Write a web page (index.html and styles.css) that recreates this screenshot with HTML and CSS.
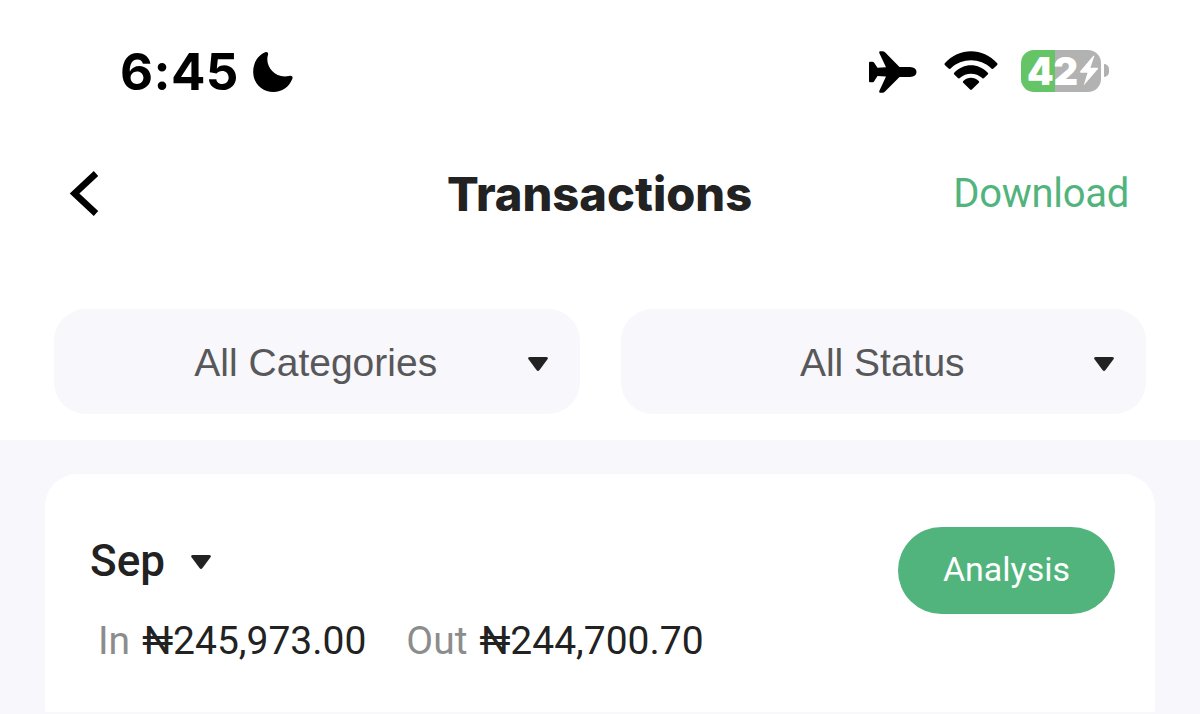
FILE: index.html
```html
<!DOCTYPE html>
<html lang="en">
<head>
    <meta charset="UTF-8">
    <meta name="viewport" content="width=device-width, initial-scale=1.0">
    <title>Transactions</title>
    <link rel="stylesheet" href="styles.css">
</head>
<body>

<!-- Status bar -->
<div class="status-bar">
    <div class="status-left">
        <span class="time">6:45</span>
        <svg class="moon" width="42" height="42" viewBox="0 0 42 42">
            <path d="M13.2 1.3C15 .6 16.6 1.8 16 3.700C12.500 15 22.500 28 37 25C39.500 24.300 41.300 25.500 40.300 28C37 36 30 41 21.500 41C10 41 1.200 32.500 1.200 21C1.200 12 5.500 4.500 13.200 1.300Z"/>
        </svg>
    </div>
    <div class="status-right">
        <svg class="plane" width="50" height="44" viewBox="0 0 50 44">
            <path d="M2 11.700H4.300Q5.400 11.700 6 12.600L9.500 17.800L18 17.200L11.300 3Q10.500 1.200 12.200 1.200H14.500Q16 1.200 17 2.300L31.500 17H42Q48.500 17.500 48.500 22Q48.500 26.500 42 27H31.500L17 41.500Q16 42.700 14.500 42.700H12.200Q10.500 42.700 11.300 41L18 26.600L9.500 26.100L6 31.400Q5.400 32.300 4.300 32.300H2Q1 32.300 1 31.300V12.700Q1 11.700 2 11.700Z"/>
        </svg>
        <svg class="wifi" width="56" height="42" viewBox="0 0 56 42">
            <path d="M1.800 13.200C16 -2.800 40 -2.800 54.200 13.200Q55 14.200 54 15.200L50.400 18.500Q49.400 19.400 48.400 18.400C37 7.500 19 7.500 7.600 18.400Q6.600 19.400 5.600 18.500L2 15.200Q1 14.200 1.800 13.200Z"/>
            <path d="M11.200 22.700C20.500 12.600 35.500 12.600 44.800 22.700Q45.700 23.700 44.700 24.600L41.100 28.100Q40.200 29 39.200 28C33 22.200 23 22.200 16.800 28Q15.800 29 14.900 28.100L11.300 24.600Q10.300 23.700 11.200 22.700Z"/>
            <path d="M20.300 31C25 26.800 31 26.800 35.700 31Q36.700 31.900 35.800 32.800L28.900 39.600Q28 40.500 27.100 39.600L20.200 32.800Q19.300 31.900 20.300 31Z"/>
        </svg>
        <div class="battery">
            <div class="battery-body">
                <span class="battery-level">42</span>
                <svg class="bolt" width="20" height="31" viewBox="0 0 18 29">
                    <path d="M13.200 .5L.8 15.300Q0 16.500 1.500 16.500H7.600L4 28.500L17.300 13.200Q18 12 16.600 12H10.300L14 1.200Z"/>
                </svg>
            </div>
            <div class="battery-tip"></div>
        </div>
    </div>
</div>

<!-- Page header -->
<div class="header">
    <svg class="back" width="32" height="48" viewBox="0 0 32 48">
        <path d="M28 3.500L6.500 23.500L28 43.500"/>
    </svg>
    <h1>Transactions</h1>
    <a class="download">Download</a>
</div>

<!-- Filters -->
<div class="filters">
    <div class="filter">
        <span class="filter-label">All Categories</span>
        <svg class="arrow" width="22" height="16" viewBox="0 0 22 16">
            <path d="M3 1H19Q22 1.200 20.300 3.500L12.500 14Q11 15.800 9.500 14L1.700 3.500Q0 1.200 3 1Z"/>
        </svg>
    </div>
    <div class="filter">
        <span class="filter-label">All Status</span>
        <svg class="arrow" width="22" height="16" viewBox="0 0 22 16">
            <path d="M3 1H19Q22 1.200 20.300 3.500L12.500 14Q11 15.800 9.500 14L1.700 3.500Q0 1.200 3 1Z"/>
        </svg>
    </div>
</div>

<!-- Monthly summary -->
<div class="content">
    <div class="card">
        <div class="summary">
            <div class="month">
                <span>Sep</span>
                <svg class="arrow" width="22" height="16" viewBox="0 0 22 16">
                    <path d="M3 1H19Q22 1.200 20.300 3.500L12.500 14Q11 15.800 9.500 14L1.700 3.500Q0 1.200 3 1Z"/>
                </svg>
            </div>
            <div class="totals">
                <span class="label">In</span>
                <span class="amount">₦245,973.00</span>
                <span class="label label-out">Out</span>
                <span class="amount">₦244,700.70</span>
            </div>
        </div>
        <button class="analysis">Analysis</button>
    </div>
</div>

</body>
</html>
```
FILE: styles.css
```css
* {
    box-sizing: border-box;
}
body {
    margin: 0;
    height: 714px;
    overflow: hidden;
    display: flex;
    flex-direction: column;
    background-color: #fff;
    color: #222;
    font-family: Roboto, sans-serif;
}
svg {
    display: block;
    flex: none;
}

/* Status bar */
.status-bar {
    height: 143px;
    padding: 0 91px 2px 120px;
    display: flex;
    justify-content: space-between;
    align-items: center;
}
.status-left, .status-right {
    display: flex;
    align-items: center;
}
.time {
    padding-top: 2px;
    font-family: Inter, sans-serif;
    font-weight: 750;
    font-size: 51px;
    line-height: 60px;
    letter-spacing: 0.4px;
    color: #000;
}
.moon {
    margin-top: 2px;
    margin-left: 13px;
}
.plane {
    margin-top: 2px;
}
.wifi {
    margin: 0 22px 0 25px;
}
.battery {
    display: flex;
    align-items: center;
    gap: 3px;
}
.battery-body {
    width: 80px;
    height: 42px;
    padding-left: 6px;
    border-radius: 13px;
    display: flex;
    align-items: center;
    background: linear-gradient(to right, #65c466 0 34px, #b2b2b2 34px);
}
.battery-level {
    font-family: Inter, sans-serif;
    font-weight: 900;
    font-size: 38px;
    line-height: 42px;
    letter-spacing: -0.3px;
    color: #fff;
}
.bolt {
    margin-left: 1px;
    fill: #fff;
}
.battery-tip {
    width: 5px;
    height: 13px;
    border-radius: 0 5px 5px 0;
    background-color: #b2b2b2;
}

/* Header */
.header {
    height: 102px;
    padding: 0 71px 0 70px;
    display: grid;
    grid-template-columns: 1fr auto 1fr;
    align-items: center;
}
.back {
    margin-left: -2px;
    fill: none;
    stroke: #000;
    stroke-width: 6.5;
}
h1 {
    margin: 0;
    font-family: Inter, sans-serif;
    font-weight: 800;
    font-size: 47px;
    line-height: 60px;
}
.download {
    justify-self: end;
    font-size: 40px;
    line-height: 48px;
    letter-spacing: -0.3px;
    color: #52b47d;
}

/* Filters */
.filters {
    height: 195px;
    padding: 64px 54px 26px;
    display: flex;
    gap: 41px;
}
.filter {
    flex: 1;
    padding: 3px 31px 0 51px;
    border-radius: 32px;
    display: flex;
    align-items: center;
    background-color: #f7f7fc;
}
.filter-label {
    flex: 1;
    text-align: center;
    font-family: "Liberation Sans", Arial, sans-serif;
    font-size: 39px;
    color: #58585a;
}
.arrow {
    fill: #222;
}
.filter .arrow {
    margin-top: 2px;
}

/* Summary card */
.content {
    flex: 1;
    padding: 34px 45px 2px;
    background-color: #f7f7fc;
}
.card {
    height: 100%;
    padding: 53px 40px 0 45px;
    border-radius: 32px 32px 0 0;
    display: flex;
    justify-content: space-between;
    align-items: flex-start;
    background-color: #fff;
}
.summary {
    padding-top: 7px;
}
.month {
    height: 54px;
    display: flex;
    align-items: center;
    gap: 25px;
    font-size: 44px;
    font-weight: 500;
}
.month .arrow {
    margin-top: 1px;
}
.totals {
    margin-top: 29px;
    padding-left: 8px;
    display: flex;
    font-size: 39px;
    line-height: 48px;
}
.label {
    color: #8c8c8c;
    margin-right: 12px;
}
.label-out {
    margin-left: 40px;
}
.analysis {
    width: 217px;
    height: 87px;
    padding: 0 0 4px;
    border: none;
    border-radius: 44px;
    background-color: #52b47d;
    color: #fff;
    font-family: Roboto, sans-serif;
    font-size: 34px;
}
```
